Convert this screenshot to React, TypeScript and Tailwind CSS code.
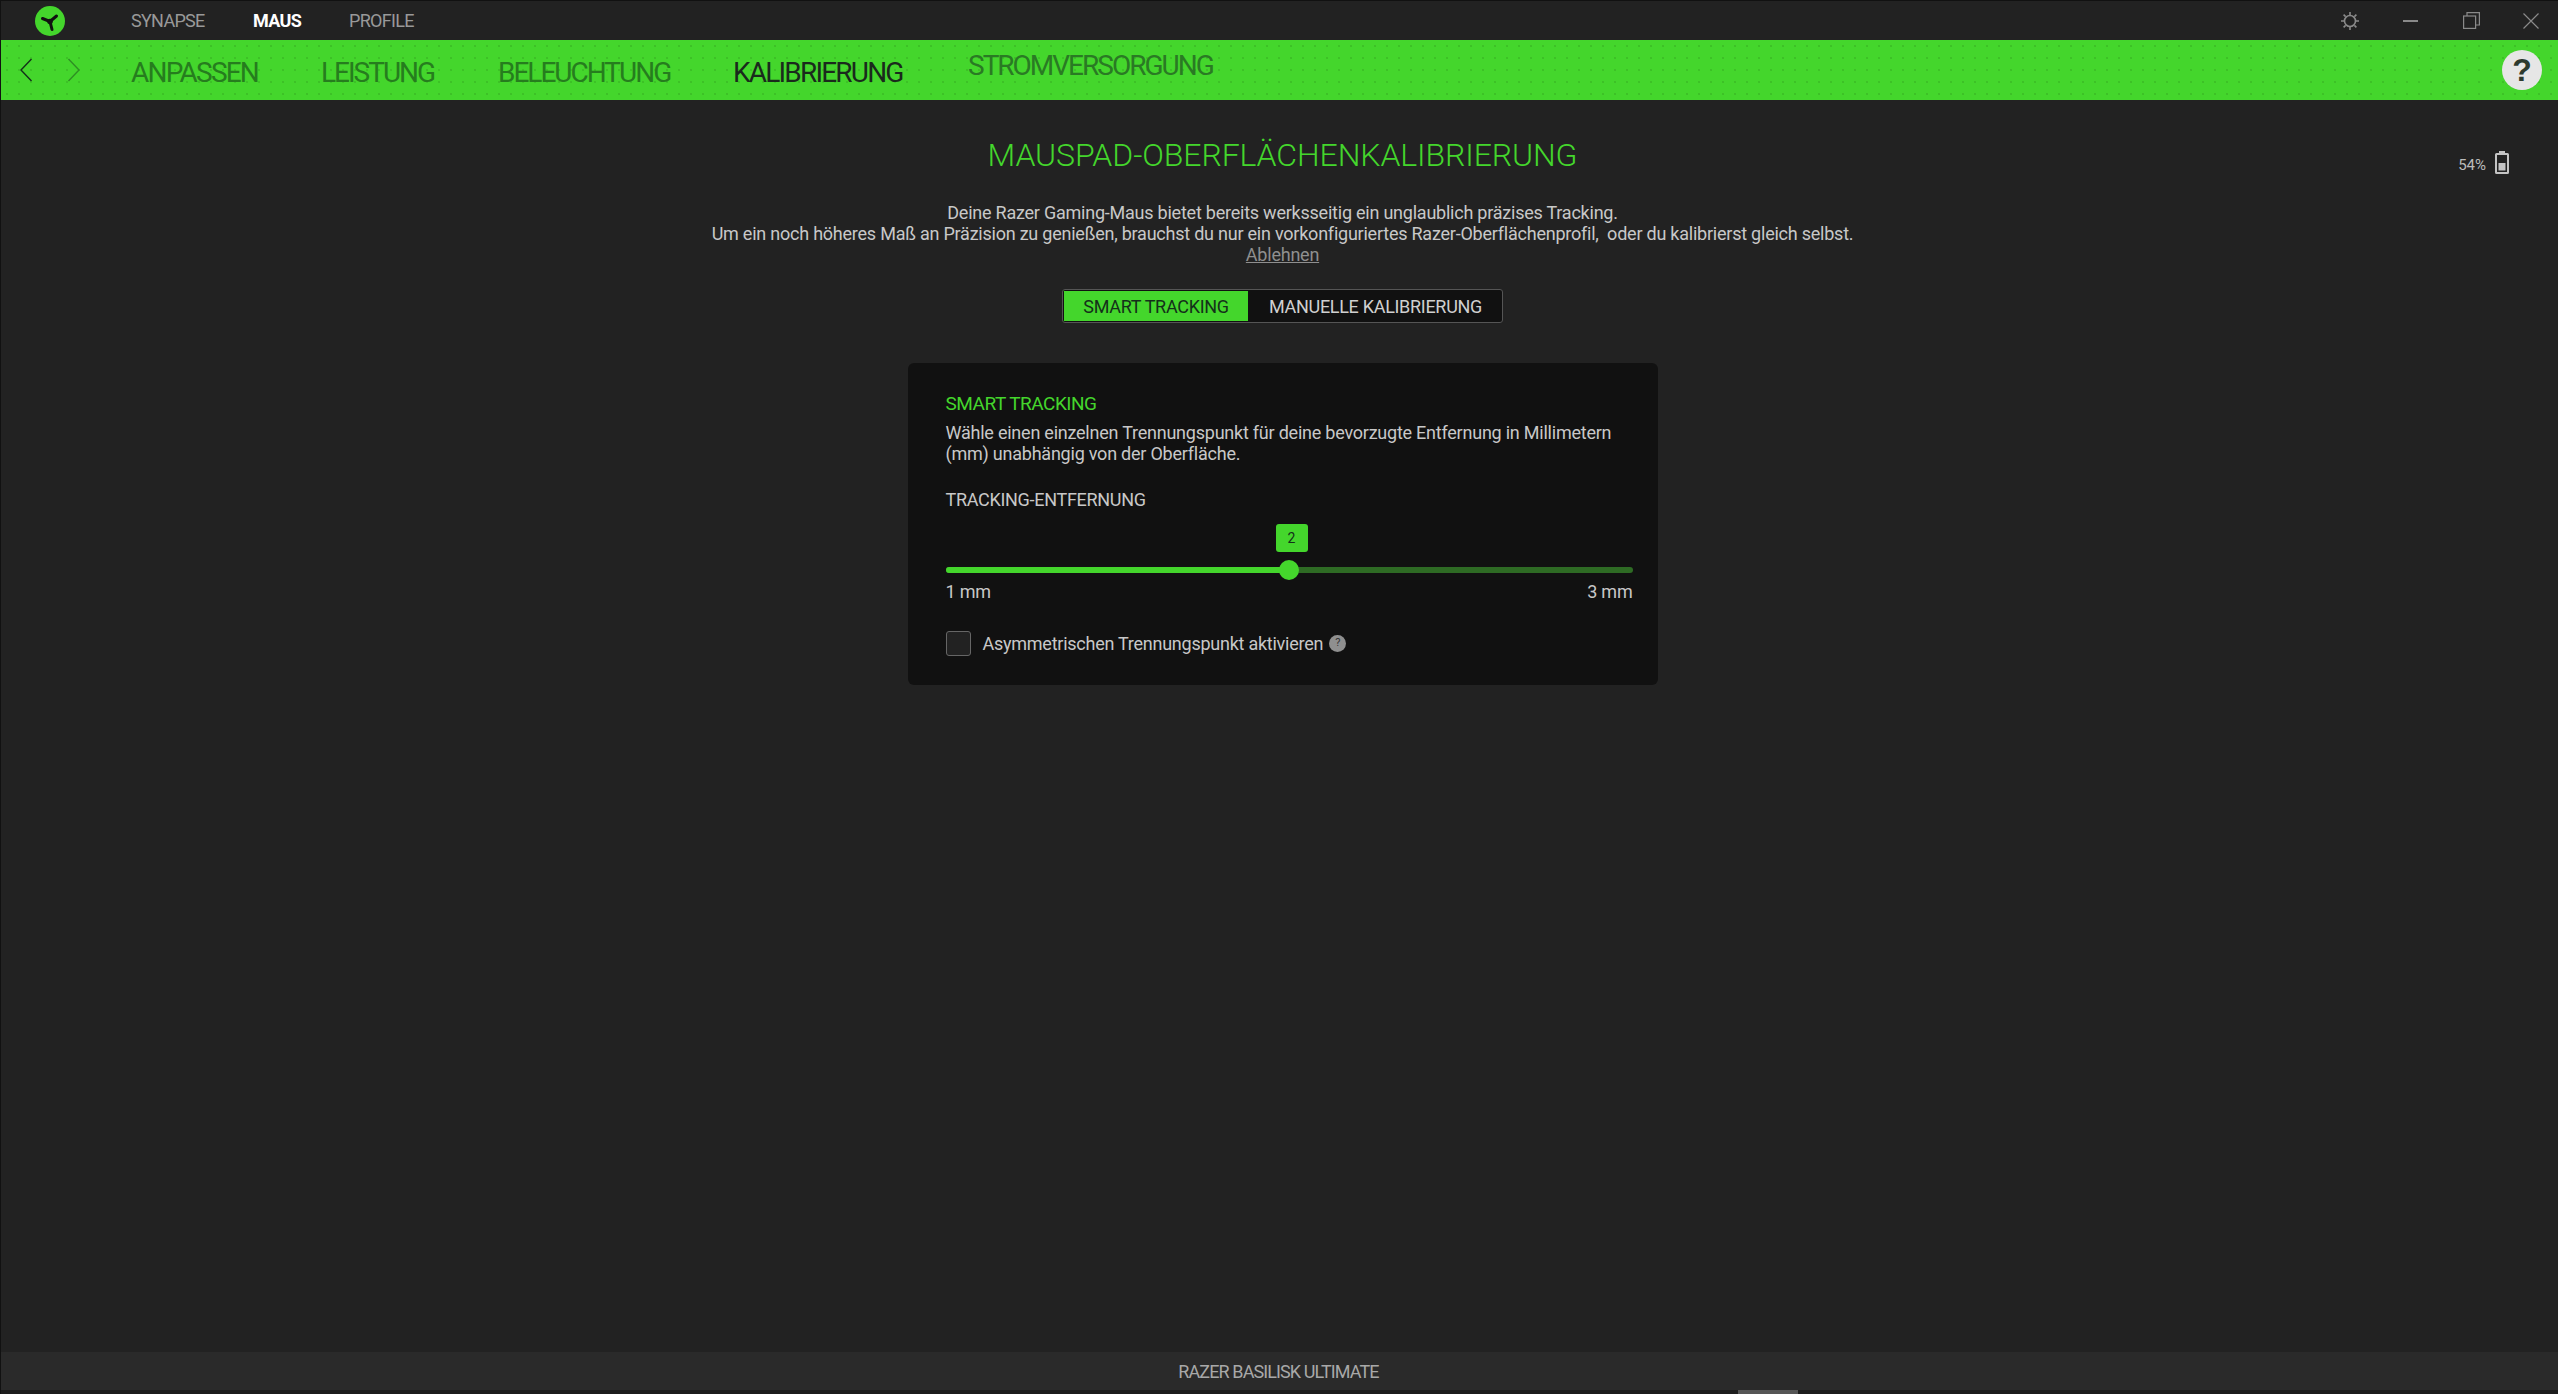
import React from "react";

const head = "font-['Roboto',sans-serif]";
const body = "font-['Roboto','Liberation_Sans',sans-serif]";

function Logo() {
  return (
    <svg width="30" height="30" viewBox="0 0 30 30">
      <circle cx="15" cy="15" r="15" fill="#44d62c" />
      <path d="M15 15.500 L7.500 12.500 M15 15.500 L21.500 10 M15 15.500 L17 23.500" stroke="#111" strokeWidth="3" strokeLinecap="round" fill="none" />
      <circle cx="15" cy="15.500" r="2.800" fill="#111" />
    </svg>
  );
}

export default function App() {
  return (
    <div className={`w-[2558px] h-[1394px] flex flex-col overflow-hidden bg-[#222222] border-l border-[#111111] ${body}`}>
      <header className="h-10 shrink-0 flex items-center border-t border-[#111111] relative">
        <div className="ml-[34px] w-[96px] shrink-0"><Logo /></div>
        <nav className={`flex text-[18px] tracking-[-0.7px] text-[#999999] ${head}`}>
          <span className="w-[122px]">SYNAPSE</span>
          <span className="w-[96px] text-white font-bold">MAUS</span>
          <span>PROFILE</span>
        </nav>
        <div className="ml-auto flex items-center text-[#8a8a8a]">
          <svg width="20" height="20" viewBox="0 0 20 20" fill="none" stroke="currentColor" strokeWidth="1.6">
            <circle cx="10" cy="10" r="5.500" />
            <path d="M10 1v3M10 16v3M1 10h3M16 10h3M3.600 3.600l2 2M14.400 14.400l2 2M3.600 16.400l2-2M14.400 5.600l2-2" />
          </svg>
          <span className="ml-[43px] w-[15px] h-[2px] bg-[#8a8a8a]" />
          <svg className="ml-[45px]" width="17" height="17" viewBox="0 0 17 17" fill="none" stroke="currentColor" strokeWidth="1.200">
            <rect x="0.600" y="4" width="12" height="12.400" />
            <path d="M4 4V0.600h12.400V13H12.600" />
          </svg>
          <svg className="ml-[43px] mr-[19px]" width="16" height="16" viewBox="0 0 16 16" fill="none" stroke="currentColor" strokeWidth="1.200">
            <path d="M0.500 0.500l15 15M15.500 0.500l-15 15" />
          </svg>
        </div>
      </header>

      <div className="h-[60px] shrink-0 flex items-start bg-[#44d62c] bg-[radial-gradient(#3cc026_0.7px,transparent_0.8px)] bg-[length:12px_12px]">
        <svg className="ml-[19px] mt-[18px]" width="13" height="24" viewBox="0 0 13 24" fill="none" stroke="#14301a" strokeWidth="1.400">
          <path d="M11.500 1L1 12l10.500 11" />
        </svg>
        <svg className="ml-[34px] mt-[18px]" width="13" height="24" viewBox="0 0 13 24" fill="none" stroke="#2f8f24" strokeWidth="1.400">
          <path d="M1.500 1L12 12 1.500 23" />
        </svg>
        <nav className={`flex ml-[51px] text-[28px] leading-[34px] tracking-[-2px] text-[#267d1e] ${head}`}>
          <span className="mt-[16px] w-[190px] tracking-[-1.800px]">ANPASSEN</span>
          <span className="mt-[16px] w-[177px]">LEISTUNG</span>
          <span className="mt-[16px] w-[235px]">BELEUCHTUNG</span>
          <span className="mt-[16px] w-[235px] tracking-[-1.800px] text-[#1a2a1c]">KALIBRIERUNG</span>
          <span className="mt-[9px] text-[#2a7a24]">STROMVERSORGUNG</span>
        </nav>
        <div className="ml-auto mr-[16px] mt-[10px] w-10 h-10 rounded-full bg-[#e6e6e6] flex items-center justify-center text-[#2d3a2e] text-[32px] font-bold font-['Liberation_Sans',sans-serif]">?</div>
      </div>

      <main className="flex-1 relative flex flex-col items-center pl-[6px] text-[#c8c8c8]">
        <div className="absolute right-[49px] top-[54px] flex items-center gap-[9px] text-[15px] text-[#bbbbbb]">
          <span>54%</span>
          <svg className="-mt-[5px]" width="14" height="23" viewBox="0 0 14 23">
            <path d="M4 0h6v2h2.500a1.500 1.500 0 0 1 1.500 1.500v18a1.500 1.500 0 0 1-1.500 1.500h-11A1.500 1.500 0 0 1 0 21.500v-18A1.500 1.500 0 0 1 1.500 2H4z" fill="#c4c4c4" />
            <rect x="2" y="4" width="10" height="17" fill="#222222" />
            <rect x="3.500" y="12" width="7" height="7.500" fill="#c4c4c4" />
          </svg>
        </div>

        <h1 className={`mt-[34px] text-[32px] leading-[42px] font-light tracking-[-0.100px] text-[#44d62c] ${head}`}>MAUSPAD-OBERFLÄCHENKALIBRIERUNG</h1>
        <div className="mt-[26px] text-center text-[18px] tracking-[-0.230px] leading-[21px]">
          <p>Deine Razer Gaming-Maus bietet bereits werksseitig ein unglaublich präzises Tracking.</p>
          <p className="whitespace-pre">Um ein noch höheres Maß an Präzision zu genießen, brauchst du nur ein vorkonfiguriertes Razer-Oberflächenprofil,  oder du kalibrierst gleich selbst.</p>
          <p className="text-[#8f8f8f] underline">Ablehnen</p>
        </div>

        <div className="mt-[24px] h-[34px] w-[441px] flex border border-[#555555] rounded-[3px] bg-[#111111] text-[18px] tracking-[-0.300px] overflow-hidden">
          <div className="w-[186px] flex items-center justify-center bg-[#44d62c] text-[#14301a] border border-[#111111]">SMART TRACKING</div>
          <div className="flex-1 flex items-center justify-center text-[#d0d0d0]">MANUELLE KALIBRIERUNG</div>
        </div>

        <section className="mt-[40px] w-[750px] h-[322px] rounded-[6px] bg-[#111111] pt-[29px] pl-[38px] pr-[25px] flex flex-col">
          <h2 className="text-[19px] leading-[24px] tracking-[-0.500px] text-[#44d62c]">SMART TRACKING</h2>
          <p className="mt-[6px] text-[18px] tracking-[-0.230px] leading-[21px] w-[680px]">Wähle einen einzelnen Trennungspunkt für deine bevorzugte Entfernung in Millimetern (mm) unabhängig von der Oberfläche.</p>
          <div className="mt-[25px] text-[18px] tracking-[-0.300px] leading-[22px]">TRACKING-ENTFERNUNG</div>
          <div className="relative mt-[13px] h-[28px] flex justify-center">
            <div className="ml-[5px] w-[32px] h-[28px] rounded-[3px] bg-[#44d62c] flex items-center justify-center text-[14px] text-[#14301a]">2</div>
          </div>
          <div className="relative mt-[15px] h-[6px] rounded-full bg-[#2e6b24] flex">
            <div className="w-[343px] h-full rounded-l-full bg-[#44d62c]" />
            <div className="absolute left-[333px] top-[-7px] w-5 h-5 rounded-full bg-[#44d62c]" />
          </div>
          <div className="mt-[8px] flex justify-between text-[18px] tracking-[-0.200px] leading-[22px]">
            <span>1 mm</span>
            <span>3 mm</span>
          </div>
          <div className="mt-[27px] flex items-center text-[18px] tracking-[-0.250px]">
            <div className="w-[25px] h-[25px] rounded-[3px] border border-[#666666] bg-[#222222]" />
            <span className="ml-[12px]">Asymmetrischen Trennungspunkt aktivieren</span>
            <span className="ml-[6px] w-[17px] h-[17px] rounded-full bg-[#8f8f8f] flex items-center justify-center text-[11px] text-[#333333]">?</span>
          </div>
        </section>
      </main>

      <footer className={`h-[38px] shrink-0 flex items-center justify-center pr-[2px] bg-[#2a2a2a] text-[18px] tracking-[-0.900px] text-[#a8a8a8] ${head}`}>RAZER BASILISK ULTIMATE</footer>
      <div className="h-1 shrink-0 bg-[#1c1c1c] flex">
        <div className="ml-[1737px] w-[60px] h-full bg-[#555555]" />
      </div>
    </div>
  );
}
